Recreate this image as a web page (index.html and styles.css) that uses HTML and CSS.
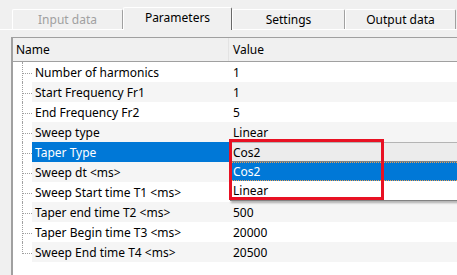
FILE: index.html
```html
<!DOCTYPE html>
<html>
<head>
<meta charset="utf-8">
<link rel="stylesheet" href="styles.css">
</head>
<body>
<div class="window">
  <div class="tabstrip">
    <div class="tab disabled t1">Input data</div>
    <div class="tab active t2">Parameters</div>
    <div class="tab t3">Settings</div>
    <div class="tab t4">Output data</div>
  </div>
  <div class="page">
    <div class="list">
      <div class="header">
        <div class="hcell hname">Name</div>
        <div class="hcell hvalue">Value</div>
      </div>
      <div class="row"><div class="tree"><div class="branch"></div></div><div class="name">Number of harmonics</div><div class="value">1</div></div>
      <div class="row alt"><div class="tree"><div class="branch"></div></div><div class="name">Start Frequency Fr1</div><div class="value">1</div></div>
      <div class="row"><div class="tree"><div class="branch"></div></div><div class="name">End Frequency Fr2</div><div class="value">5</div></div>
      <div class="row alt"><div class="tree"><div class="branch"></div></div><div class="name">Sweep type</div><div class="value">Linear</div></div>
      <div class="row sel"><div class="tree"><div class="branch"></div></div><div class="name">Taper Type</div><div class="value combo">Cos2</div></div>
      <div class="row alt"><div class="tree"><div class="branch"></div></div><div class="name">Sweep dt &lt;ms&gt;</div><div class="value"></div></div>
      <div class="row"><div class="tree"><div class="branch"></div></div><div class="name">Sweep Start time T1 &lt;ms&gt;</div><div class="value"></div></div>
      <div class="row alt"><div class="tree"><div class="branch"></div></div><div class="name">Taper end time T2 &lt;ms&gt;</div><div class="value">500</div></div>
      <div class="row"><div class="tree"><div class="branch"></div></div><div class="name">Taper Begin time T3 &lt;ms&gt;</div><div class="value">20000</div></div>
      <div class="row alt"><div class="tree"><div class="branch last"></div></div><div class="name">Sweep End time T4 &lt;ms&gt;</div><div class="value">20500</div></div>
    </div>
  </div>
  <div class="dropdown">
    <div class="opt optsel">Cos2</div>
    <div class="opt">Linear</div>
  </div>
  <div class="highlight"></div>
</div>
</body>
</html>
```
FILE: styles.css
```css
* { box-sizing: border-box; }
html, body { margin: 0; padding: 0; }
body {
  background: #f0f0f0;
  font-family: "Noto Sans", "Open Sans", sans-serif;
  font-size: 12px;
  color: #000;
  width: 457px;
  height: 275px;
  overflow: hidden;
}
.window { position: relative; width: 457px; height: 275px; overflow: hidden; }

.tabstrip {
  display: flex;
  align-items: flex-start;
  height: 29px;
  padding-left: 12px;
  padding-top: 7px;
  position: relative;
  z-index: 2;
}
.tab {
  height: 20px;
  margin-top: 2px;
  border-top: 1px solid #fff;
  border-left: 1px solid #fff;
  border-right: 1px solid #a0a0a0;
  border-radius: 2px 2px 0 0;
  display: flex;
  align-items: center;
  justify-content: center;
  line-height: 1;
}
.t1 { width: 111px; }
.t2 { width: 109px; }
.t3 { width: 113px; }
.t4 { width: 111px; }
.tab.disabled { color: #a0a0a0; }
.tab.active {
  height: 23px;
  margin-top: 0;
  border-right: 1px solid #696969;
  background: #f0f0f0;
  padding-bottom: 3px;
}
.page {
  border-top: 1px solid #fff;
  padding: 7px 0 0 11px;
}
.list {
  background: #fff;
  border-left: 2px solid #a0a0a0;
  border-top: 1px solid #a0a0a0;
  height: 239px;
}
.header {
  display: flex;
  height: 24px;
  background: #f0f0f0;
  border-bottom: 1px solid #a0a0a0;
}
.hcell {
  display: flex;
  align-items: center;
  padding-left: 3px;
}
.hname { width: 216px; border-right: 1px solid #e3e3e3; }
.hvalue { flex: 1; padding-left: 4px; }

.row {
  display: flex;
  height: 20px;
}
.tree { width: 19px; display: flex; background: #fff; }
.branch {
  margin-left: 9px;
  width: 10px;
  border-left: 1px dotted #a0a0a0;
}
.branch::before {
  content: "";
  display: block;
  height: 11px;
  border-bottom: 1px dotted #a0a0a0;
}
.branch.last { border-left-color: transparent; }
.branch.last::before { border-left: 1px dotted #a0a0a0; margin-left: -1px; }
.name {
  width: 197px;
  display: flex;
  align-items: center;
  padding-left: 3px;
  white-space: nowrap;
}
.value {
  flex: 1;
  display: flex;
  align-items: center;
  padding-left: 4px;
}
.row.alt .name, .row.alt .value { background: #f5f5f5; }
.row.sel .name { background: #0078d7; color: #fff; }
.value.combo {
  background: #ececec;
  border-top: 1px solid #b4b4b4;
  margin-left: 1px;
  padding-left: 3px;
}

.dropdown {
  position: absolute;
  left: 230px;
  top: 161px;
  width: 240px;
  background: #fff;
  border: 1px solid #828282;
  box-shadow: 1px 2px 2px rgba(0,0,0,0.3);
}
.opt {
  height: 19px;
  display: flex;
  align-items: center;
  padding-left: 2px;
}
.optsel {
  background: #0078d7;
  color: #fff;
  outline: 1px dotted #f0a050;
  outline-offset: -1px;
}
.highlight {
  position: absolute;
  left: 229px;
  top: 139px;
  width: 155px;
  height: 61px;
  border: 3px solid #e81123;
}
```
